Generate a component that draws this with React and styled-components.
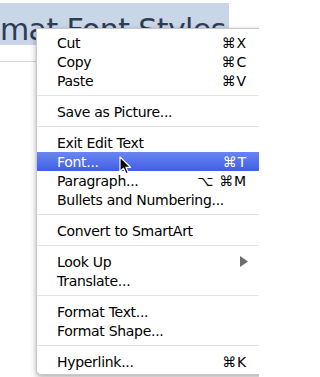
import React from "react";
import styled, { createGlobalStyle } from "styled-components";

const GlobalStyle = createGlobalStyle`
  html, body {
    margin: 0;
    padding: 0;
    background: #ffffff;
  }
  body {
    font-family: "DejaVu Sans", "Liberation Sans", sans-serif;
    overflow: hidden;
  }
`;

const Page = styled.div`
  position: relative;
  width: 259px;
  height: 377px;
  overflow: hidden;
  background: #ffffff;
  padding-top: 3px;
  box-sizing: border-box;
`;

const Selection = styled.div`
  width: 229px;
  height: 42px;
  background: #c8d6e8;
  display: flex;
  align-items: flex-end;
`;

const Title = styled.div`
  font-family: "DejaVu Sans", sans-serif;
  font-size: 30px;
  line-height: 1;
  color: #2d3d52;
  white-space: nowrap;
  letter-spacing: -0.6px;
`;

const Rule = styled.div`
  margin-top: 16px;
  height: 1px;
  background: #cdd6e2;
`;

const Menu = styled.ul`
  position: absolute;
  top: 28px;
  left: 36px;
  width: 232px;
  margin: 0;
  padding: 4px 0 3px;
  list-style: none;
  background: #ffffff;
  border: 1px solid #c9c9c9;
  border-radius: 0 0 5px 5px;
  box-shadow: 0 3px 6px rgba(0, 0, 0, 0.28), 0 0 2px rgba(0, 0, 0, 0.1);
`;

const Item = styled.li`
  display: flex;
  align-items: center;
  justify-content: space-between;
  height: 19px;
  padding: 0 22px 0 20px;
  font-size: 14px;
  letter-spacing: -0.3px;
  color: ${({ active }) => (active ? "#ffffff" : "#000000")};
  background: ${({ active }) =>
    active ? "linear-gradient(to bottom, #6a86f2, #3f5fe6)" : "transparent"};
  white-space: nowrap;
`;

const Shortcut = styled.span`
  font-size: 14px;
  letter-spacing: 0.8px;
`;

const Separator = styled.li`
  height: 1px;
  margin: 5px 0 6px;
  background: #e3e3e3;
`;

const SubArrow = styled.svg`
  width: 8px;
  height: 11px;
  margin-right: -1px;
`;

const Cursor = styled.svg`
  position: absolute;
  left: 119px;
  top: 156px;
  width: 13px;
  height: 19px;
`;

const menu = [
  { label: "Cut", key: "⌘X" },
  { label: "Copy", key: "⌘C" },
  { label: "Paste", key: "⌘V" },
  "sep",
  { label: "Save as Picture..." },
  "sep",
  { label: "Exit Edit Text" },
  { label: "Font...", key: "⌘T", active: true },
  { label: "Paragraph...", key: "⌥ ⌘M" },
  { label: "Bullets and Numbering..." },
  "sep",
  { label: "Convert to SmartArt" },
  "sep",
  { label: "Look Up", sub: true },
  { label: "Translate..." },
  "sep",
  { label: "Format Text..." },
  { label: "Format Shape..." },
  "sep",
  { label: "Hyperlink...", key: "⌘K" },
];

export default function App() {
  return (
    <>
      <GlobalStyle />
      <Page>
        <Selection>
          <Title>mat Font Styles</Title>
        </Selection>
        <Rule />
        <Menu>
          {menu.map((m, i) =>
            m === "sep" ? (
              <Separator key={i} />
            ) : (
              <Item key={i} active={m.active}>
                <span>{m.label}</span>
                {m.key && <Shortcut>{m.key}</Shortcut>}
                {m.sub && (
                  <SubArrow viewBox="0 0 8 11">
                    <path d="M0 0 L8 5.5 L0 11 Z" fill="#6e6e6e" />
                  </SubArrow>
                )}
              </Item>
            )
          )}
        </Menu>
        <Cursor viewBox="0 0 13 19">
          <path
            d="M1 1 L1 15.5 L4.5 12.2 L7 17.8 L9.3 16.8 L6.9 11.3 L11.5 11.3 Z"
            fill="#000"
            stroke="#fff"
            strokeWidth="1.2"
            strokeLinejoin="round"
          />
        </Cursor>
      </Page>
    </>
  );
}
